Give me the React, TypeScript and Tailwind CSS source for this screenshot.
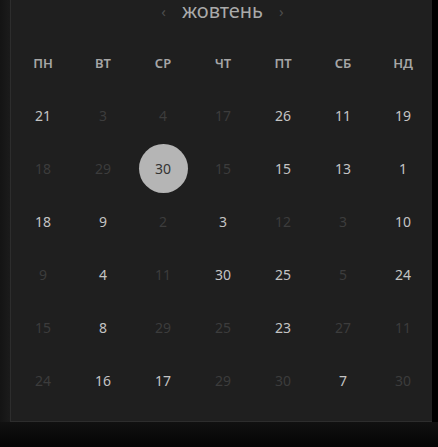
import React from 'react';

type Day = { n: number; on?: boolean; sel?: boolean };

const weekdays = ['ПН', 'ВТ', 'СР', 'ЧТ', 'ПТ', 'СБ', 'НД'];

const d = (n: number, on = false): Day => ({ n, on });

const weeks: Day[][] = [
  [d(21, true), d(3), d(4), d(17), d(26, true), d(11, true), d(19, true)],
  [d(18), d(29), { n: 30, sel: true }, d(15), d(15, true), d(13, true), d(1, true)],
  [d(18, true), d(9, true), d(2), d(3, true), d(12), d(3), d(10, true)],
  [d(9), d(4, true), d(11), d(30, true), d(25, true), d(5), d(24, true)],
  [d(15), d(8, true), d(29), d(25), d(23, true), d(27), d(11)],
  [d(24), d(16, true), d(17, true), d(29), d(30), d(7, true), d(30)],
];

export default function App() {
  return (
    <div
      className="w-[438px] h-[447px] overflow-hidden bg-black flex flex-col"
      style={{ fontFamily: '"Noto Sans", "Open Sans", sans-serif' }}
    >
      <div className="flex h-[422px]">
        {/* left edge shadow */}
        <div className="w-[10px] bg-gradient-to-r from-[#141414] to-[#1b1b1b]" />

        {/* calendar panel */}
        <div className="w-[422px] bg-[#1f1f1f] border-l border-b border-[#2d2d2d] flex flex-col">
          <div className="h-[22px] flex items-center justify-center gap-[16px] pl-[2px]">
            <span className="text-[15px] text-[#4d4d4d] leading-none">‹</span>
            <span className="text-[20px] text-[#aaaaaa] leading-none">жовтень</span>
            <span className="text-[15px] text-[#4d4d4d] leading-none">›</span>
          </div>

          <div className="mt-[15px] pl-[2px] grid grid-cols-7 w-[422px]">
            {weekdays.map((w) => (
              <div
                key={w}
                className="h-[53px] flex items-center justify-center text-[13px] font-semibold text-[#a6a6a6]"
              >
                {w}
              </div>
            ))}
          </div>

          <div className="-mt-[1px] pl-[2px] grid grid-cols-7 w-[422px]">
            {weeks.flat().map((day, i) => (
              <div key={i} className="h-[53px] flex items-center justify-center">
                {day.sel ? (
                  <div className="w-[49px] h-[49px] rounded-full bg-[#b5b5b5] flex items-center justify-center text-[14px] text-[#333333]">
                    {day.n}
                  </div>
                ) : (
                  <span
                    className={
                      day.on
                        ? 'text-[14px] text-[#c4c4c4]'
                        : 'text-[14px] text-[#3c3c3c]'
                    }
                  >
                    {day.n}
                  </span>
                )}
              </div>
            ))}
          </div>
        </div>

        <div className="flex-1 bg-black" />
      </div>

      {/* bottom shadow */}
      <div className="flex-1 bg-gradient-to-b from-[#111111] to-[#050505]" />
    </div>
  );
}
